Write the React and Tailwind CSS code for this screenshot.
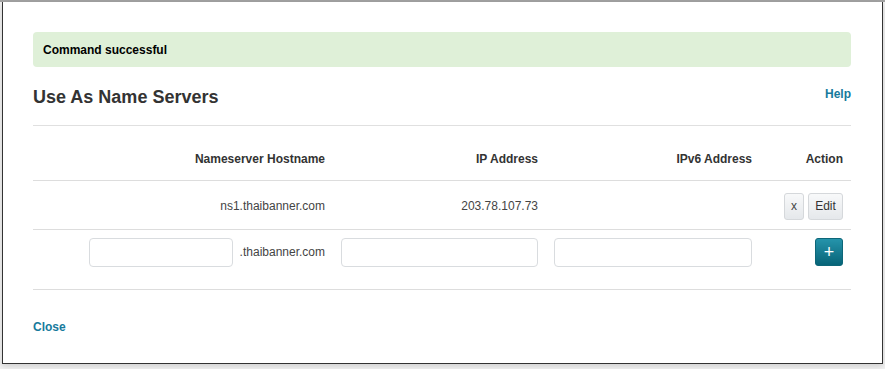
export default function App() {
  const font = { fontFamily: '"Liberation Sans", Arial, sans-serif' };

  return (
    <div className="w-[885px] h-[369px] bg-[#f1f1f1] text-[#333] overflow-hidden" style={font}>
      <div className="h-[2px] bg-[#a3a3a3]" />
      <div className="ml-[2px] w-[881px] h-[362px] bg-white border-x border-b border-[#333] pl-[30px] pr-[31px] pt-[30px] shadow-[0_2px_6px_rgba(0,0,0,0.15)]">
        {/* alert */}
        <div className="h-[35px] rounded-[4px] bg-[#dff0d8] px-[10px] flex items-center text-[12px] font-bold text-black">
          Command successful
        </div>

        {/* heading */}
        <div className="flex justify-between items-start mt-[20px] h-[38px]">
          <h2 className="text-[18px] font-bold leading-[20px] text-[#333]">Use As Name Servers</h2>
          <a className="text-[12px] font-bold text-[#177a9c] leading-[14px] mt-0">Help</a>
        </div>
        <div className="border-t border-[#e0e0e0]" />

        {/* table */}
        <table className="w-full mt-[10px] text-[12px] border-collapse">
          <thead>
            <tr className="border-b border-[#ddd] h-[44px] font-bold">
              <th className="w-[300px] text-right pr-[8px] pt-[2px]">Nameserver Hostname</th>
              <th className="w-[213px] text-right pr-[8px] pt-[2px]">IP Address</th>
              <th className="w-[214px] text-right pr-[8px] pt-[2px]">IPv6 Address</th>
              <th className="text-right pr-[8px] pt-[2px]">Action</th>
            </tr>
          </thead>
          <tbody>
            <tr className="border-b border-[#ddd] h-[49px] text-[#444]">
              <td className="text-right pr-[8px] pt-[3px]">ns1.thaibanner.com</td>
              <td className="text-right pr-[8px] pt-[3px]">203.78.107.73</td>
              <td className="text-right pr-[8px] pt-[3px]"></td>
              <td className="pr-[8px] pt-[3px]">
                <div className="flex justify-end gap-[4px]">
                  <button className="w-[20px] h-[27px] rounded-[3px] border border-[#d5d8db] bg-gradient-to-b from-[#f8f9fa] to-[#e5e8eb] text-[12px] text-[#444]">
                    x
                  </button>
                  <button className="w-[35px] h-[27px] rounded-[3px] border border-[#d5d8db] bg-gradient-to-b from-[#f8f9fa] to-[#e5e8eb] text-[12px] text-[#333]">
                    Edit
                  </button>
                </div>
              </td>
            </tr>
            <tr className="border-b border-[#ddd] h-[60px]">
              <td className="pr-[8px] pt-[8px] align-top">
                <div className="flex items-center justify-end gap-[7px] text-[#444]">
                  <input className="w-[144px] h-[29px] rounded-[4px] border border-[#d9dcdf] bg-white" />
                  <span>.thaibanner.com</span>
                </div>
              </td>
              <td className="pr-[8px] pt-[8px] align-top">
                <div className="flex justify-end">
                  <input className="w-[197px] h-[29px] rounded-[4px] border border-[#d9dcdf] bg-white" />
                </div>
              </td>
              <td className="pr-[8px] pt-[8px] align-top">
                <div className="flex justify-end">
                  <input className="w-[198px] h-[29px] rounded-[4px] border border-[#d9dcdf] bg-white" />
                </div>
              </td>
              <td className="pr-[8px] pt-[8px] align-top">
                <div className="flex justify-end">
                  <button className="w-[28px] h-[28px] rounded-[3px] border border-[#0d6678] bg-gradient-to-b from-[#2594ab] to-[#066478] text-white text-[18px] leading-none flex items-center justify-center">
                    +
                  </button>
                </div>
              </td>
            </tr>
          </tbody>
        </table>

        <a className="block mt-[28px] text-[12px] font-bold text-[#177a9c]">Close</a>
      </div>
    </div>
  );
}
